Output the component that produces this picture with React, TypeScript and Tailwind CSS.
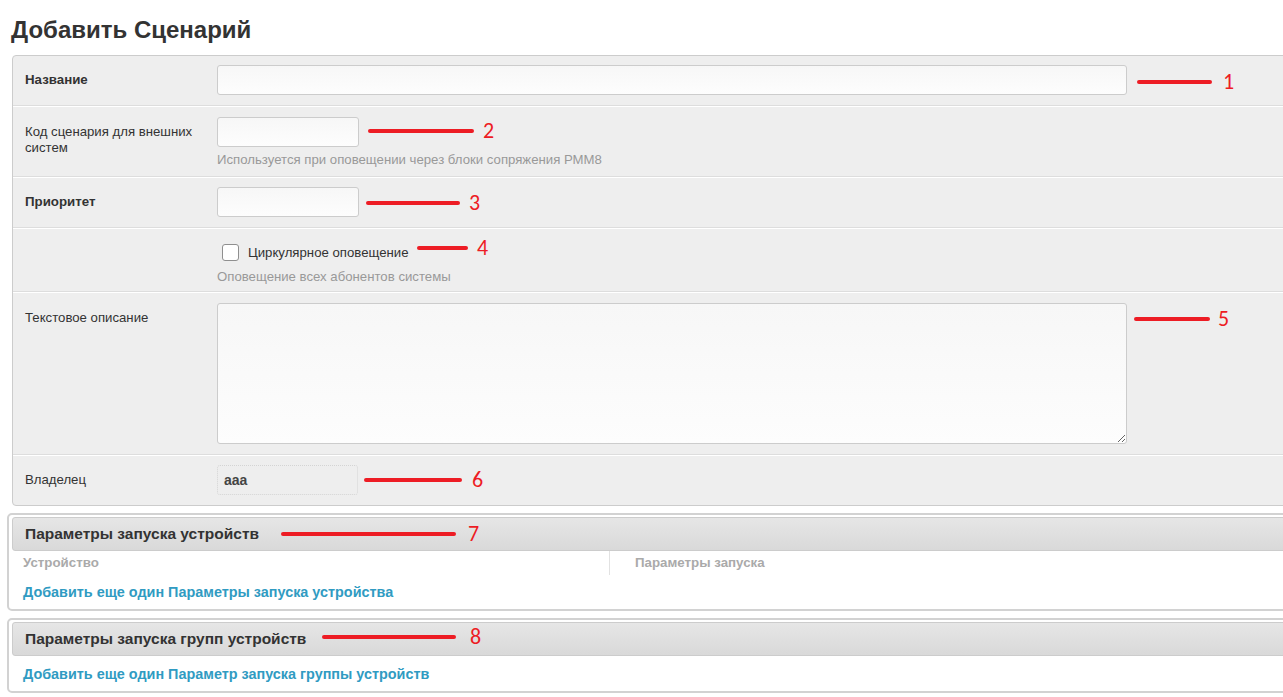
import React from "react";

type RowProps = {
  label?: string;
  bold?: boolean;
  className: string;
  children: React.ReactNode;
};

function Row({ label, bold, className, children }: RowProps) {
  return (
    <div className={"flex pl-[12px] " + className}>
      <div
        className={
          "w-[178px] mr-[14px] pt-[7px] leading-[16px] text-[#333] " +
          (bold ? "font-bold text-[13.3px]" : "text-[13.2px]")
        }
      >
        {label}
      </div>
      <div className="flex flex-col">{children}</div>
    </div>
  );
}

function Help({ children, className }: { children: React.ReactNode; className: string }) {
  return <div className={"text-[13.2px] leading-[14px] text-[#999] " + className}>{children}</div>;
}

// red numbered marker: a thick stroke followed by its number
function Callout({ pos, line, gap, n }: { pos: string; line: string; gap: string; n: string }) {
  return (
    <div className={"absolute flex items-center " + pos}>
      <span className={"h-[4px] rounded-full bg-[#ed1c24] " + line} />
      <span className={"text-[22px] leading-[22px] font-['Carlito','Lato',sans-serif] text-[#ed1c24] " + gap}>
        {n}
      </span>
    </div>
  );
}

const inputCls =
  "h-[30px] rounded-[3px] border border-[#cccccc] bg-gradient-to-b from-[#f7f7f7] to-[#fdfdfd] outline-none";

const headCls =
  "h-[34px] border border-[#cccccc] rounded-[3px] bg-gradient-to-b from-[#e6e6e6] to-[#d9d9d9] pl-[12px] text-[15.5px] leading-[32px] font-bold text-[#333]";

const linkCls = "pl-[11px] text-[14.4px] leading-[14px] font-bold text-[#309bc2]";

export default function App() {
  return (
    <div className="relative w-[1283px] h-[697px] overflow-hidden bg-white font-['Liberation_Sans',Arial,sans-serif] text-[13px] text-[#333]">
      <h1 className="pl-[11px] pt-[16px] mb-[11px] text-[24px] leading-[28px] font-bold text-[#333]">
        Добавить Сценарий
      </h1>

      {/* main fieldset */}
      <div className="ml-[12px] w-[1290px] bg-[#eeeeee] border border-[#cccccc] rounded-[4px]">
        <Row label="Название" bold className="pt-[9px] pb-[10px] border-b border-[#dddddd]">
          <input className={inputCls + " w-[910px]"} />
        </Row>
        <Row
          label="Код сценария для внешних систем"
          className="pt-[10px] pb-[9px] border-t border-white border-b border-b-[#dddddd]"
        >
          <input className={inputCls + " w-[142px]"} />
          <Help className="mt-[6px]">Используется при оповещении через блоки сопряжения РММ8</Help>
        </Row>
        <Row
          label="Приоритет"
          bold
          className="pt-[9px] pb-[10px] border-t border-white border-b border-b-[#dddddd]"
        >
          <input className={inputCls + " w-[142px]"} />
        </Row>
        <Row className="pt-[14px] pb-[7px] border-t border-white border-b border-b-[#dddddd]">
          <div className="flex items-center h-[19px] pl-[5px]">
            <span className="w-[17px] h-[17px] rounded-[3px] border border-[#8f8f8f] bg-white" />
            <span className="ml-[9px] text-[13.2px] leading-[19px] text-[#333]">Циркулярное оповещение</span>
          </div>
          <Help className="mt-[8px]">Оповещение всех абонентов системы</Help>
        </Row>
        <Row
          label="Текстовое описание"
          className="pt-[10px] pb-[10px] border-t border-white border-b border-b-[#dddddd]"
        >
          <textarea className="w-[910px] h-[141px] rounded-[3px] border border-[#cccccc] bg-gradient-to-b from-[#f7f7f7] to-[#fdfdfd] outline-none" />
        </Row>
        <Row label="Владелец" className="pt-[9px] pb-[10px] border-t border-white">
          <div className="w-[141px] h-[30px] rounded-[3px] border border-dotted border-[#d4d4d4] pl-[6px] text-[14px] leading-[28px] font-bold text-[#444]">
            aaa
          </div>
        </Row>
      </div>

      {/* inline group: devices */}
      <div className="mt-[7px] ml-[7px] w-[1300px] border-2 border-[#d2d2d2] rounded-[5px] pt-[2px] pl-[3px] pb-[10px] bg-white">
        <div className={headCls}>Параметры запуска устройств</div>
        <div className="flex h-[24px] text-[13.3px] leading-[24px] font-bold text-[#aaaaaa]">
          <div className="w-[598px] pl-[11px] border-r border-[#e2e2e2]">Устройство</div>
          <div className="pl-[25px]">Параметры запуска</div>
        </div>
        <div className={linkCls + " mt-[10px]"}>Добавить еще один Параметры запуска устройства</div>
      </div>

      {/* inline group: device groups */}
      <div className="mt-[7px] ml-[7px] w-[1300px] border-2 border-[#d2d2d2] rounded-[5px] pt-[2px] pl-[3px] pb-[10px] bg-white">
        <div className={headCls}>Параметры запуска групп устройств</div>
        <div className={linkCls + " mt-[11px]"}>Добавить еще один Параметр запуска группы устройств</div>
      </div>

      {/* numbered callouts */}
      <Callout pos="left-[1137px] top-[71px]" line="w-[75px]" gap="ml-[11px]" n="1" />
      <Callout pos="left-[368px] top-[120px]" line="w-[106px]" gap="ml-[9px]" n="2" />
      <Callout pos="left-[366px] top-[192px]" line="w-[94px]" gap="ml-[9px]" n="3" />
      <Callout pos="left-[417px] top-[237px]" line="w-[51px]" gap="ml-[9px]" n="4" />
      <Callout pos="left-[1134px] top-[308px]" line="w-[76px]" gap="ml-[8px]" n="5" />
      <Callout pos="left-[364px] top-[469px]" line="w-[98px]" gap="ml-[10px]" n="6" />
      <Callout pos="left-[281px] top-[523px]" line="w-[175px]" gap="ml-[12px]" n="7" />
      <Callout pos="left-[322px] top-[626px]" line="w-[134px]" gap="ml-[14px]" n="8" />
    </div>
  );
}
